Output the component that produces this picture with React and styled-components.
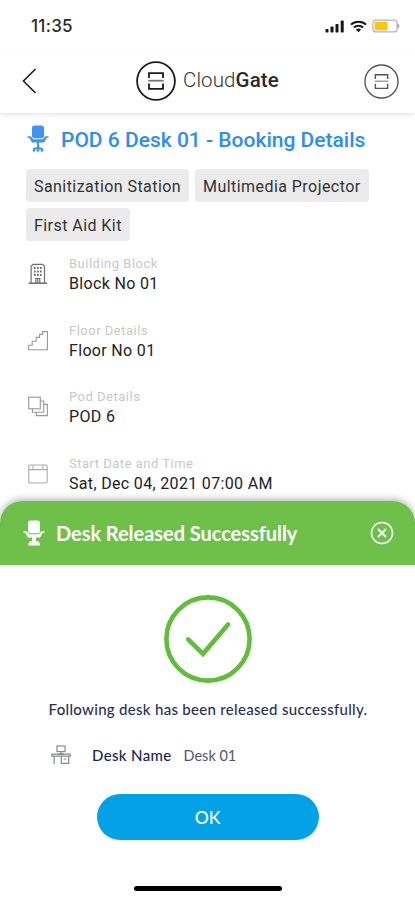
import React from 'react'
import styled, { createGlobalStyle } from 'styled-components'

const GlobalStyle = createGlobalStyle`
  * {
    box-sizing: border-box;
  }
  body {
    margin: 0;
    background: #fff;
    font-family: Roboto, "Liberation Sans", sans-serif;
  }
`

const Phone = styled.div`
  position: relative;
  width: 415px;
  height: 900px;
  overflow: hidden;
  background: #fff;
`

const StatusBar = styled.div`
  display: flex;
  align-items: center;
  height: 52px;
  padding: 0 15px 0 31px;
  svg + svg {
    margin-left: 5px;
  }
`

const Clock = styled.div`
  flex: 1;
  font: 500 17px/20px Inter, "Liberation Sans", sans-serif;
  letter-spacing: 0.3px;
  color: #2a2a2a;
`

const NavBar = styled.div`
  display: flex;
  align-items: center;
  height: 61px;
  padding: 0 16px 3px 22px;
  box-shadow: 0 2px 4px rgba(0, 0, 0, 0.1);
`

const Brand = styled.div`
  display: flex;
  align-items: center;
  margin-left: 98px;
  flex: 1;
`

const BrandName = styled.div`
  margin: -2px 0 0 7px;
  font-size: 20.5px;
  font-weight: 300;
  line-height: 24px;
  letter-spacing: 0.1px;
  color: #333;
  b {
    font-weight: 500;
    color: #2a2a2a;
  }
`

const Content = styled.div`
  padding: 13px 26px 0;
`

const TitleRow = styled.div`
  display: flex;
  align-items: center;
  height: 28px;
  padding-left: 1px;
  svg {
    margin-top: -3px;
  }
`

const PageTitle = styled.h1`
  margin: 0 0 0 12px;
  font-size: 21px;
  font-weight: 500;
  line-height: 28px;
  white-space: nowrap;
  color: #2e8df0;
`

const Tags = styled.div`
  display: flex;
  flex-wrap: wrap;
  gap: 6px;
  margin-top: 15px;
`

const Tag = styled.div`
  height: 33px;
  padding: 0 8px;
  border-radius: 4px;
  background: #ebebeb;
  font-size: 16px;
  line-height: 35px;
  letter-spacing: 0.44px;
  white-space: nowrap;
  color: #333;
`

const Details = styled.div`
  margin-top: 14px;
`

const DetailRow = styled.div`
  display: flex;
  height: 66.5px;
  svg {
    margin: 7px 19px 0 1px;
  }
`

const DetailLabel = styled.div`
  font-size: 13px;
  line-height: 18px;
  letter-spacing: 0.5px;
  color: #c8c8c8;
`

const DetailValue = styled.div`
  font-size: 16px;
  line-height: 21px;
  letter-spacing: 0.33px;
  color: #222;
`

const Sheet = styled.div`
  position: absolute;
  left: 0;
  right: 0;
  bottom: 0;
  height: 399px;
  display: flex;
  flex-direction: column;
  align-items: center;
  border-radius: 22px 22px 0 0;
  background: #fff;
  box-shadow: 0 -2px 7px rgba(0, 0, 0, 0.28);
  font-family: Lato, "Liberation Sans", sans-serif;
`

const SheetHeader = styled.div`
  display: flex;
  align-items: center;
  align-self: stretch;
  height: 64px;
  padding: 0 21px 0 23px;
  border-radius: 22px 22px 0 0;
  background: #6fc04a;
`

const SheetTitle = styled.h2`
  flex: 1;
  margin: 0 0 0 11px;
  font-size: 20px;
  font-weight: 700;
  line-height: 26px;
  letter-spacing: -0.05px;
  color: #fff;
`

const SuccessIcon = styled.svg`
  margin-top: 29px;
`

const Message = styled.div`
  margin: 15px 0 0 1px;
  font-size: 15px;
  font-weight: 500;
  line-height: 20px;
  letter-spacing: 0.3px;
  color: #2b2f57;
`

const DeskRow = styled.div`
  display: flex;
  align-items: center;
  align-self: stretch;
  height: 24px;
  margin-top: 24px;
  padding-left: 51px;
`

const DeskLabel = styled.div`
  margin-left: 21px;
  font-size: 15px;
  font-weight: 500;
  letter-spacing: 0.35px;
  color: #1e2350;
`

const DeskName = styled.div`
  margin-left: 12px;
  font-size: 14.5px;
  letter-spacing: 0;
  color: #54566e;
`

const OkButton = styled.button`
  width: 222px;
  height: 46px;
  margin-top: 27px;
  padding: 1px 0 0;
  border: 0;
  border-radius: 23px;
  background: #03a2e6;
  font: 500 17.5px/45px Lato, "Liberation Sans", sans-serif;
  color: #fff;
`

const HomeBar = styled.div`
  width: 148px;
  height: 5px;
  margin-top: 46px;
  border-radius: 3px;
  background: #000;
`

const Signal = () => (
  <svg width="20" height="13" viewBox="0 0 20 13" fill="#161616">
    <rect x="0.5" y="9" width="3" height="3.5" rx="0.8" />
    <rect x="5.5" y="6.5" width="3" height="6" rx="0.8" />
    <rect x="10.5" y="4" width="3" height="8.5" rx="0.8" />
    <rect x="15.7" y="0.5" width="3" height="12" rx="0.8" />
  </svg>
)

const Wifi = () => (
  <svg width="17" height="13" viewBox="0 0 17 13">
    <g fill="none" stroke="#161616" strokeWidth="2">
      <path d="M1 4.6C5 0.7 12 0.7 16 4.6" />
      <path d="M3.9 7.5C6.5 5.1 10.5 5.1 13.1 7.5" />
    </g>
    <path d="M5.9 9.5C7.4 8.2 9.6 8.2 11.1 9.5L8.5 12.2Z" fill="#161616" />
  </svg>
)

const Battery = () => (
  <svg width="28" height="14" viewBox="0 0 28 14">
    <rect x="0.9" y="1.1" width="24.2" height="11.8" rx="3" fill="#fff" stroke="#b5b5b5" strokeWidth="1.2" />
    <rect x="2.6" y="2.8" width="13" height="8.4" rx="1.2" fill="#fdc50b" />
    <path d="M26 5Q28 7 26 9Z" fill="#999" stroke="#999" strokeWidth="0.6" />
  </svg>
)

const Logo = ({ size, stroke, color }) => (
  <svg width={size} height={size} viewBox="0 0 40 40" fill="none" stroke={color}>
    <circle cx="20" cy="20" r="18.9" strokeWidth={stroke} />
    <path d="M13 17V12.2H27V17" strokeWidth={stroke} />
    <path d="M12.3 19.7H27.7" strokeWidth={stroke} opacity="0.6" />
    <path d="M13 22.5V27.8H27V22.5" strokeWidth={stroke} />
  </svg>
)

const Chair = ({ color, wheels }) => (
  <svg width="22" height="27" viewBox="0 0 22 27" fill={color}>
    <rect x="5" y="0.5" width="12" height="12.8" rx="2.4" />
    <path d="M0.5 11.2H3.6L6.3 14.3H15.7L18.4 11.2H21.5V12.8H19.8L17 17.4H5L2.2 12.8H0.5Z" />
    {wheels
      ? (
        <g>
          <path d="M10 17H12V22L16 23.2V24.4H6V23.2L10 22Z" />
          <circle cx="7" cy="25.4" r="1.3" />
          <circle cx="11" cy="25.4" r="1.3" />
          <circle cx="15" cy="25.4" r="1.3" />
        </g>
      )
      : <path d="M9 17H13V21.2H16V23H17V25.4H5.4V23H6.4V21.2H9Z" />}
  </svg>
)

const Building = () => (
  <svg width="23" height="24" viewBox="0 0 23 24" fill="none" stroke="#6f6f6f" strokeWidth="1.2">
    <path d="M1.5 21.2H20" strokeWidth="1.5" />
    <path d="M4.1 21V4.3L6.1 2.3H15.5L17.5 4.3V21" />
    <path d="M8.8 21V16.5H12.8V21M10.8 17V21" />
    <path d="M7 6H8.7M10 6H11.7M13 6H14.7M7 9.5H8.7M10 9.5H11.7M13 9.5H14.7M7 13H8.7M10 13H11.7M13 13H14.7" strokeWidth="1.8" />
  </svg>
)

const Stairs = () => (
  <svg width="23" height="24" viewBox="0 0 23 24" fill="none" stroke="#999" strokeWidth="1.1">
    <path d="M1.6 20.8V16.2H5.2V12.2H9.2V8.4H12.6V5.4H15.6V2.6H20.4V20.8Z" />
  </svg>
)

const Layers = () => (
  <svg width="23" height="24" viewBox="0 0 23 24" fill="none" stroke="#999" strokeWidth="1.1">
    <rect x="1.7" y="2.2" width="11.6" height="11.6" />
    <path d="M13.3 6H16.8V17.2H5.4V13.8" />
    <path d="M16.8 9.4H20.4V20.6H9.2V17.2" />
  </svg>
)

const Calendar = () => (
  <svg width="23" height="24" viewBox="0 0 23 24" fill="none" stroke="#ababab" strokeWidth="1.1">
    <rect x="1.8" y="3" width="18.4" height="18" rx="1.2" />
    <path d="M1.8 7.6H20.2M6 3V7M16 3V7" />
  </svg>
)

const DeskIcon = () => (
  <svg width="20" height="20" viewBox="0 0 20 20" fill="none" stroke="#888a92" strokeWidth="1.2">
    <rect x="6" y="1" width="8" height="5.6" />
    <path d="M10 6.6V9.2M7 9.2H13" />
    <path d="M0.8 9.2H19.2V11.2H0.8ZM3.2 11.2V19M10.3 11.2V18.3H17.7V11.2M12.7 14H15.3" />
  </svg>
)

const details = [
  { icon: <Building />, label: 'Building Block', value: 'Block No 01' },
  { icon: <Stairs />, label: 'Floor Details', value: 'Floor No 01' },
  { icon: <Layers />, label: 'Pod Details', value: 'POD 6' },
  { icon: <Calendar />, label: 'Start Date and Time', value: 'Sat, Dec 04, 2021 07:00 AM' }
]

export default function App() {
  return (
    <Phone>
      <GlobalStyle />
      <StatusBar>
        <Clock>11:35</Clock>
        <Signal />
        <Wifi />
        <Battery />
      </StatusBar>
      <NavBar>
        <svg width="16" height="28" viewBox="0 0 16 28" fill="none" stroke="#1c1c1c" strokeWidth="1.6">
          <path d="M13.5 2L1.5 14L13.5 26" />
        </svg>
        <Brand>
          <Logo size={40} stroke={1.8} color="#1c1c1c" />
          <BrandName>Cloud<b>Gate</b></BrandName>
        </Brand>
        <Logo size={35} stroke={1.6} color="#555" />
      </NavBar>
      <Content>
        <TitleRow>
          <Chair color="#3f93f5" wheels />
          <PageTitle>POD 6 Desk 01 - Booking Details</PageTitle>
        </TitleRow>
        <Tags>
          <Tag>Sanitization Station</Tag>
          <Tag>Multimedia Projector</Tag>
          <Tag>First Aid Kit</Tag>
        </Tags>
        <Details>
          {details.map(item => (
            <DetailRow key={item.label}>
              {item.icon}
              <div>
                <DetailLabel>{item.label}</DetailLabel>
                <DetailValue>{item.value}</DetailValue>
              </div>
            </DetailRow>
          ))}
        </Details>
      </Content>
      <Sheet>
        <SheetHeader>
          <Chair color="#fff" />
          <SheetTitle>Desk Released Successfully</SheetTitle>
          <svg width="24" height="24" viewBox="0 0 24 24" fill="none" stroke="#fff" strokeWidth="1.5">
            <circle cx="12" cy="12" r="10.5" />
            <path d="M8 8L16 16M16 8L8 16" strokeWidth="1.8" />
          </svg>
        </SheetHeader>
        <SuccessIcon width="90" height="90" viewBox="0 0 90 90" fill="none" stroke="#63bd3c">
          <circle cx="45" cy="45" r="41.6" strokeWidth="4.6" />
          <path d="M25.2 45.4L40 59.8L65 30.4" strokeWidth="4.6" strokeLinecap="round" />
        </SuccessIcon>
        <Message>Following desk has been released successfully.</Message>
        <DeskRow>
          <DeskIcon />
          <DeskLabel>Desk Name</DeskLabel>
          <DeskName>Desk 01</DeskName>
        </DeskRow>
        <OkButton>OK</OkButton>
        <HomeBar />
      </Sheet>
    </Phone>
  )
}
